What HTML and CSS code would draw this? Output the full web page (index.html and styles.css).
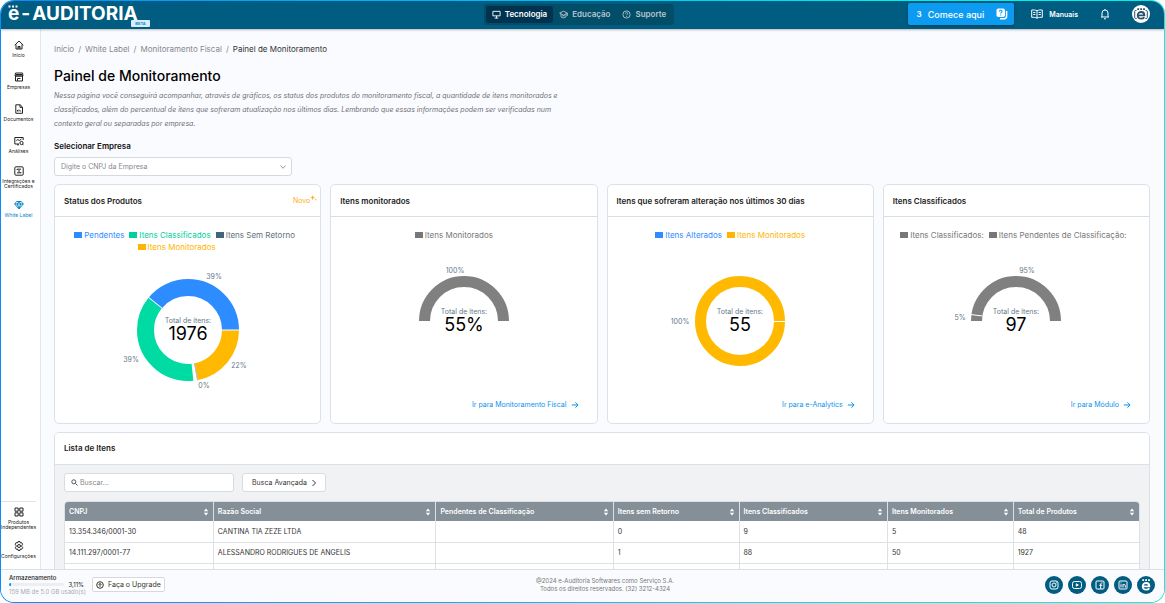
FILE: index.html
```html
<!DOCTYPE html>
<html lang="pt-BR">
<head>
<meta charset="utf-8">
<meta name="viewport" content="width=device-width, initial-scale=1">
<title>Painel de Monitoramento</title>
<link rel="stylesheet" href="styles.css">
</head>
<body>
<svg class="sprite" aria-hidden="true">
  <symbol id="sort" viewBox="0 0 6 8"><path d="M3 .6 5.2 3.2H.8zM3 7.4.8 4.8h4.4z" fill="currentColor"/></symbol>
  <symbol id="arrow" viewBox="0 0 8 8"><path d="M.8 4h6.2M4.4 1.3 7.1 4 4.4 6.7" fill="none" stroke="currentColor"/></symbol>
  <symbol id="brand" viewBox="0 0 18 18"><path d="M12.300 12.200c-.7 1-1.800 1.500-3.100 1.500-2.100 0-3.500-1.300-3.500-3.300s1.400-3.400 3.500-3.400c1.900 0 3.200 1.200 3.200 3.400H6.200" fill="none" stroke="currentColor" stroke-width="1.800"/><path d="M5.300 3.300h1.800v1.700H5.300zM8.200 3.300H10v1.700H8.200zM11.100 3.300h1.800v1.700h-1.800z" fill="currentColor"/></symbol>
</svg>
<div class="frame">
<div class="app">
  <header class="topbar">
    <a class="logo" href="#"><span class="logo-e">e<svg viewBox="0 0 10 3" aria-hidden="true"><path d="M.5.500h2v2h-2zM4 .500h2v2H4zM7.500.500h2v2h-2z"/></svg></span><span>-</span><span>AUDITORIA</span><span class="beta">BETA</span></a>
    <nav class="tabs">
      <button class="tab active"><svg viewBox="0 0 10 10"><path d="M1 1.500h8v5H1zM5 6.500V9M3 9h4"/></svg>Tecnologia</button>
      <button class="tab"><svg viewBox="0 0 10 10"><path d="M.700 3.500 5 1.300l4.300 2.200L5 5.700zM2.200 4.500v3c1.500 1.600 4 1.600 5.600 0v-3M9.300 3.500v3M3.500 6.500h3"/></svg>Educação</button>
      <button class="tab"><svg viewBox="0 0 10 10"><circle cx="5" cy="5" r="4"/><path d="M3.800 4c0-1.500 2.500-1.500 2.500 0 0 .900-1.200.900-1.200 1.900M5.100 6.800v.9"/></svg>Suporte</button>
    </nav>
    <div class="actions">
      <button class="start"><b>3</b><span>Comece aqui</span><svg viewBox="0 0 12 12"><rect x=".5" y=".5" width="8.500" height="8.500" rx="1.800" fill="#fff"/><path d="M10.600 3v5.300a2.500 2.500 0 0 1-2.500 2.500H4" fill="none" stroke="#fff" stroke-width="1.500"/><path d="M3.500 3.500c0-1.800 2.700-1.500 2.500.2C5.900 4.500 4.700 4.500 4.700 5.600M4.700 6.500v1" fill="none" stroke="#0c9bf0" stroke-width="1.100"/></svg></button>
      <a class="manuals" href="#"><svg viewBox="0 0 12 10"><path d="M6 1.800C4.500.900 2.500.900.700 1v7.300c1.800-.100 3.800 0 5.300.900 1.500-.900 3.500-1 5.300-.900V1C9.500.900 7.500.900 6 1.800zM6 1.800v7.400M2.200 3.500h2.200M2.200 5.500h2.200M7.600 3.500h2.200M7.600 5.500h2.200"/></svg>Manuais</a>
      <button class="bell" aria-label="Notificações"><svg viewBox="0 0 10 12"><path d="M1 9h8M2 9V5a3 3 0 0 1 6 0v4M5 2V1M4 10.800h2"/></svg></button>
      <button class="avatar" aria-label="Conta"><svg viewBox="0 0 18 18"><circle cx="9" cy="9" r="9" fill="#fff"/><path d="M4.500 5.500h-.800a1 1 0 0 0-1 1v6a1 1 0 0 0 1 1h1M13.500 5.500h.8a1 1 0 0 1 1 1v6a1 1 0 0 1-1 1h-1" fill="none" stroke="currentColor"/><use href="#brand" width="18" height="18"/></svg></button>
    </div>
  </header>
  <div class="middle">
    <nav class="side">
      <div class="side-group">
        <a href="#"><svg viewBox="0 0 10 10"><path d="M.700 5.200 5 1l4.300 4.200M2 4.500V9h6V4.500M4 9V6.500h2V9M3.800 7h2.400"/></svg><span>Início</span></a>
        <a href="#"><svg viewBox="0 0 10 10"><path d="M1.500 1h7l.5 3H1zM1.500 4v5h7V4M1 4h8M2 2.500h6M3.500 9V6.500h3"/></svg><span>Empresas</span></a>
        <a href="#"><svg viewBox="0 0 10 10"><path d="M1.800.800h4.400l2.300 2.300v6.200H1.800zM6 1v2.400h2.500M3.500 7.500V6M5 7.500v-2M6.600 7.500v-1"/></svg><span>Documentos</span></a>
        <a href="#"><svg viewBox="0 0 10 10"><path d="M5 8H.800V1.500h8.400V4M2.300 4.500l1.500-1 1.500 1L7.500 3M3 8.800h2"/><circle cx="7.500" cy="7" r="1.600"/><path d="m8.600 8.200 1 1"/></svg><span>Análises</span></a>
        <a href="#"><svg viewBox="0 0 10 10"><rect x=".8" y=".8" width="8.400" height="8.400" rx="1"/><path d="M3 4V3.200h4M7 6v.8H3M4 5h2"/></svg><span>Integrações e Certificados</span></a>
        <a class="current" href="#"><svg viewBox="0 0 10 10"><path d="M2.600 1.500h4.800L9.300 4 5 9 .700 4zM.700 4h8.600M3.300 4 5 8.600 6.700 4 5 1.600z"/></svg><span>White Label</span></a>
      </div>
      <div class="side-group bottom">
        <a href="#"><svg viewBox="0 0 10 10"><path d="M1 1h3.200v3.200H1zM5.800 1H9v3.200H5.800zM1 5.800h3.200V9H1zM5.800 5.800H9V9H5.800z"/></svg><span>Produtos Independentes</span></a>
        <a href="#"><svg viewBox="0 0 10 10"><path d="M4 .6h2l.4 1.300 1.200-.3 1 1.700-.8 1 .1 1.400.800.900-1 1.700-1.300-.300L6 9.400H4L3.600 8l-1.300.3-1-1.700.8-.9-.1-1.400-.8-1 1-1.700 1.300.3z"/><circle cx="5" cy="5" r="1.500"/></svg><span>Configurações</span></a>
      </div>
    </nav>
    <main class="content">
      <nav class="crumbs" aria-label="Trilha"><a href="#">Início</a><i>/</i><a href="#">White Label</a><i>/</i><a href="#">Monitoramento Fiscal</a><i>/</i><span>Painel de Monitoramento</span></nav>
      <h1>Painel de Monitoramento</h1>
      <p class="intro">Nessa página você conseguirá acompanhar, através de gráficos, os status dos produtos do monitoramento fiscal, a quantidade de itens monitorados e classificados, além do percentual de itens que sofreram atualização nos últimos dias. Lembrando que essas informações podem ser verificadas num contexto geral ou separadas por empresa.</p>
      <label class="field-label" for="empresa">Selecionar Empresa</label>
      <div class="select-wrap">
        <select id="empresa"><option>Digite o CNPJ da Empresa</option></select>
        <svg viewBox="0 0 8 8"><path d="M1.500 2.500 4 5.300l2.500-2.800"/></svg>
      </div>

      <section class="cards">
        <article class="card">
          <header><h2>Status dos Produtos</h2><span class="new">Novo<svg viewBox="0 0 8 8"><path d="M3 0l.8 2.200L6 3l-2.200.800L3 6l-.8-2.200L0 3l2.200-.8zM6.600 4l.4 1 1 .4-1 .4-.4 1-.4-1-1-.4 1-.4z"/></svg></span></header>
          <ul class="legend wide">
            <li class="blue">Pendentes</li><li class="green">Itens Classificados</li><li class="slate">Itens Sem Retorno</li><li class="amber wrapped">Itens Monitorados</li>
          </ul>
          <svg class="chart" viewBox="0 0 160 140" role="img" aria-label="Status dos produtos">
            <g fill="none" stroke-width="17">
              <circle cx="80" cy="77" r="42.500" pathLength="100" stroke="#ffb900" stroke-dasharray="22.100 77.900"/>
              <circle cx="80" cy="77" r="42.500" pathLength="100" stroke="#00dba4" stroke-dasharray="37.600 62.400" stroke-dashoffset="-23.300"/>
              <circle cx="80" cy="77" r="42.500" pathLength="100" stroke="#2d8cff" stroke-dasharray="39.100 60.900" stroke-dashoffset="-60.900"/>
              <path d="M86.600 110.500 89.500 127.500" stroke="#a9c4d3" stroke-width="1"/>
              <path d="M113 77h19M54.500 55.500 39 43" stroke="#fff" stroke-width="1"/>
            </g>
            <text class="total" x="80" y="70">Total de itens:</text><text class="value" x="80" y="87">1976</text>
            <text class="pct" x="106" y="26">39%</text><text class="pct" x="23" y="109">39%</text><text class="pct" x="131" y="115">22%</text><text class="pct" x="96" y="135">0%</text>
          </svg>
        </article>
        <article class="card">
          <header><h2>Itens monitorados</h2></header>
          <ul class="legend"><li class="gray">Itens Monitorados</li></ul>
          <svg class="chart" viewBox="0 0 160 140" role="img" aria-label="Itens monitorados">
            <path d="M40.500 80a39.500 39.500 0 0 1 79 0" fill="none" stroke="#808080" stroke-width="11"/>
            <text class="total" x="80" y="73">Total de itens:</text><text class="value" x="80" y="90">55%</text>
            <text class="pct" x="71" y="32">100%</text>
          </svg>
          <a class="more" href="#">Ir para Monitoramento Fiscal<svg><use href="#arrow"/></svg></a>
        </article>
        <article class="card">
          <header><h2>Itens que sofreram alteração nos últimos 30 dias</h2></header>
          <ul class="legend"><li class="blue">Itens Alterados</li><li class="amber">Itens Monitorados</li></ul>
          <svg class="chart" viewBox="0 0 160 140" role="img" aria-label="Itens alterados">
            <circle cx="80" cy="80" r="39.500" fill="none" stroke="#ffb900" stroke-width="11"/>
            <path d="M114 80.500h12" stroke="#fff"/>
            <text class="total" x="80" y="73">Total de itens:</text><text class="value" x="80" y="90">55</text>
            <text class="pct" x="20" y="83">100%</text>
          </svg>
          <a class="more" href="#">Ir para e-Analytics<svg><use href="#arrow"/></svg></a>
        </article>
        <article class="card">
          <header><h2>Itens Classificados</h2></header>
          <ul class="legend wide"><li class="gray">Itens Classificados:</li><li class="gray">Itens Pendentes de Classificação:</li></ul>
          <svg class="chart" viewBox="0 0 160 140" role="img" aria-label="Itens classificados">
            <path d="M40.500 80a39.500 39.500 0 0 1 79 0" fill="none" stroke="#808080" stroke-width="11"/>
            <path d="M34.500 73.500 46.500 75" stroke="#fff"/>
            <text class="total" x="80" y="73">Total de itens:</text><text class="value" x="80" y="90">97</text>
            <text class="pct" x="91" y="32">95%</text><text class="pct" x="24" y="79">5%</text>
          </svg>
          <a class="more" href="#">Ir para Módulo<svg><use href="#arrow"/></svg></a>
        </article>
      </section>

      <section class="list">
        <h2>Lista de Itens</h2>
        <div class="list-body">
          <div class="tools">
            <label class="search"><svg viewBox="0 0 8 8"><circle cx="3.200" cy="3.200" r="2.300"/><path d="m5 5 2.500 2.500"/></svg><input type="text" placeholder="Buscar..." aria-label="Buscar"></label>
            <button class="advanced">Busca Avançada<svg viewBox="0 0 8 8"><path d="M2.500 1 5.500 4l-3 3"/></svg></button>
          </div>
          <div class="table-wrap">
          <table>
            <colgroup><col class="c-cnpj"><col class="c-name"><col class="c-pend"><col class="c-num"><col class="c-cnpj"><col class="c-num"><col class="c-num"></colgroup>
            <thead><tr>
              <th><div>CNPJ<svg><use href="#sort"/></svg></div></th>
              <th><div>Razão Social<svg><use href="#sort"/></svg></div></th>
              <th><div>Pendentes de Classificação<svg><use href="#sort"/></svg></div></th>
              <th><div>Itens sem Retorno<svg><use href="#sort"/></svg></div></th>
              <th><div>Itens Classificados<svg><use href="#sort"/></svg></div></th>
              <th><div>Itens Monitorados<svg><use href="#sort"/></svg></div></th>
              <th><div>Total de Produtos<svg><use href="#sort"/></svg></div></th>
            </tr></thead>
            <tbody>
              <tr><td>13.354.346/0001-30</td><td>CANTINA TIA ZEZE LTDA</td><td></td><td>0</td><td>9</td><td>5</td><td>48</td></tr>
              <tr><td>14.111.297/0001-77</td><td>ALESSANDRO RODRIGUES DE ANGELIS</td><td></td><td>1</td><td>88</td><td>50</td><td>1927</td></tr>
              <tr><td></td><td></td><td></td><td></td><td></td><td></td><td></td></tr>
            </tbody>
          </table>
          </div>
        </div>
      </section>
    </main>
  </div>
  <footer class="bottombar">
    <div class="left">
      <div class="storage">
        <strong>Armazenamento</strong>
        <div class="meter"><div class="track"><div class="fill" style="width:3.11%"></div></div><span>3,11%</span></div>
        <small>159 MB de 5.0 GB usado(s)</small>
      </div>
      <button class="upgrade"><svg viewBox="0 0 8 8"><circle cx="4" cy="4" r="3.300"/><path d="M4 5.800V2.500M2.600 3.800 4 2.400l1.400 1.400"/></svg>Faça o Upgrade</button>
    </div>
    <p>@2024 e-Auditoria Softwares como Serviço S.A.<br>Todos os direitos reservados. (32) 3212-4324</p>
    <div class="social">
      <a href="#" aria-label="Instagram"><svg viewBox="0 0 18 18"><rect x="5" y="5" width="8" height="8" rx="2"/><circle cx="9" cy="9" r="2"/><path d="M11 6.800h.8"/></svg></a>
      <a href="#" aria-label="YouTube"><svg viewBox="0 0 18 18"><rect x="4.500" y="5.500" width="9" height="7" rx="2"/><path d="m8.300 7.800 2 1.200-2 1.200z"/></svg></a>
      <a href="#" aria-label="Facebook"><svg viewBox="0 0 18 18"><rect x="5" y="5" width="8" height="8" rx="1"/><path d="M9.700 13V8c0-.800.500-1.200 1.800-1.100M8.300 9.300h3"/></svg></a>
      <a href="#" aria-label="LinkedIn"><svg viewBox="0 0 18 18"><rect x="5" y="5" width="8" height="8" rx="1"/><path d="M7 8.200V11.500M7 6.500v.8M9 11.500V8.200M9 9.200c.5-1.200 2.300-1 2.300.5v1.800"/></svg></a>
      <a href="#" aria-label="e-Auditoria"><svg class="solid" viewBox="0 0 18 18"><use href="#brand" width="18" height="18"/></svg></a>
    </div>
  </footer>
</div>
</div>
</body>
</html>
```
FILE: styles.css
```css
* { box-sizing: border-box; }

body {
  margin: 0;
  background: #fff;
  color: #222;
  font-family: Inter, "Liberation Sans", sans-serif;
  font-size: 7px;
}

h1, h2, p, ul { margin: 0; padding: 0; }
a { color: inherit; text-decoration: none; }
button, input, select { font: inherit; color: inherit; }
button { border: 0; background: none; padding: 0; cursor: pointer; }
svg { flex: none; }
.sprite { position: absolute; width: 0; height: 0; }

.frame {
  height: 100vh;
  padding: 1px;
  border-radius: 14px;
  background: linear-gradient(90deg, #0a8dfa, #00bdf4 45%, #00ece9 75%, #00f2e4);
}

.app {
  display: flex;
  flex-direction: column;
  height: 100%;
  border-radius: 13px;
  overflow: hidden;
  background: #fafbff;
}

/* Top bar */
.topbar {
  display: grid;
  grid-template-columns: 1fr auto 1fr;
  align-items: center;
  height: 28px;
  flex: none;
  padding: 0 14px 2px 7px;
  background: #005c80;
  box-shadow: 0 1px 2px #0004;
  z-index: 1;
}

.logo {
  position: relative;
  display: flex;
  gap: 2px;
  justify-self: start;
  color: #fff;
  font-size: 19px;
  font-weight: 700;
  line-height: 20px;
}
.logo-e { position: relative; }
.logo-e svg { position: absolute; left: 0; top: 1px; width: 10px; height: 3px; fill: #fff; }
.beta {
  position: absolute;
  right: -12px;
  bottom: -3px;
  padding: 0 4px;
  border-radius: 1px;
  background: #d5efff;
  color: #1188c0;
  font-size: 4px;
  line-height: 7px;
}

.tabs {
  display: flex;
  padding: 2px;
  border-radius: 3px;
  background: #024d68;
}
.tab {
  display: flex;
  align-items: center;
  gap: 4px;
  height: 17px;
  padding: 0 6px;
  border-radius: 3px;
  color: #b5c6d0;
  font-size: 8px;
  font-weight: 600;
}
.tab svg { width: 9px; height: 9px; fill: none; stroke: currentColor; }
.tab.active { background: #00334f; color: #fff; }

.actions { display: flex; align-items: center; justify-content: flex-end; color: #fff; }
.start {
  display: flex;
  align-items: center;
  gap: 6px;
  height: 22px;
  padding: 0 6px 0 9px;
  border-radius: 2px;
  background: #0c9bf0;
  box-shadow: 0 1px 3px #0005;
  font-size: 9px;
  font-weight: 500;
}
.start b { font-size: 8px; font-weight: 600; }
.start svg { width: 12px; height: 12px; margin-left: 6px; }
.manuals {
  display: flex;
  align-items: center;
  gap: 6px;
  margin-left: 17px;
  font-weight: 600;
}
.manuals svg { width: 12px; height: 10px; fill: none; stroke: currentColor; }
.bell { margin-left: 22px; }
.bell svg { display: block; width: 10px; height: 12px; fill: none; stroke: currentColor; }
.avatar { margin-left: 22px; color: #28506a; }
.avatar svg { display: block; width: 18px; height: 18px; }

/* Side menu */
.middle { display: flex; flex: 1; min-height: 0; }
.side {
  display: flex;
  flex-direction: column;
  justify-content: space-between;
  width: 40px;
  flex: none;
  padding: 4px 4px 3px 0;
  border-right: 1px solid #e3e6ea;
  background: #fff;
}
.side a {
  display: flex;
  flex-direction: column;
  align-items: center;
  justify-content: center;
  gap: 3px;
  height: 32px;
  color: #222;
  font-size: 5px;
  line-height: 5px;
  text-align: center;
}
.side svg { width: 10px; height: 10px; fill: none; stroke: currentColor; }
.side .current { color: #0b86c5; }
.bottom { border-top: 1px solid #dfe2e6; }

/* Content */
.content {
  flex: 1;
  min-width: 0;
  overflow: auto;
  scrollbar-width: none;
  padding: 14px 14px 14px 13px;
}
.crumbs { display: flex; gap: 4px; color: #85888d; font-size: 8px; line-height: 12px; }
.crumbs i { font-style: normal; }
.crumbs span { color: #333; }
h1 { margin-top: 12px; color: #000; font-size: 14px; font-weight: 500; line-height: 18px; }
.intro {
  max-width: 510px;
  margin-top: 4px;
  color: #6d7075;
  font-size: 7px;
  font-style: italic;
  font-weight: 400;
  line-height: 14px;
}
.field-label { display: block; margin-top: 9px; color: #111; font-size: 8px; font-weight: 600; line-height: 12px; }
.select-wrap { position: relative; width: 238px; margin-top: 5px; }
.select-wrap select {
  display: block;
  width: 100%;
  height: 19px;
  padding: 0 6px;
  border: 1px solid #d5d9dd;
  border-radius: 3px;
  appearance: none;
  background: #fff;
  color: #85888d;
}
.select-wrap svg { position: absolute; right: 5px; top: 6px; width: 8px; height: 8px; fill: none; stroke: #999; }

.cards {
  display: grid;
  grid-template-columns: repeat(4, minmax(0, 1fr));
  gap: 9px;
  margin-top: 8px;
}
.card {
  display: flex;
  flex-direction: column;
  align-items: center;
  min-height: 240px;
  border: 1px solid #dce1e6;
  border-radius: 5px;
  background: #fff;
}
.card header {
  display: flex;
  align-items: center;
  justify-content: space-between;
  align-self: stretch;
  height: 32px;
  padding: 0 3px 0 9px;
  border-bottom: 1px solid #d8dfe5;
}
h2 { color: #222; font-size: 8px; font-weight: 600; }
.new { display: flex; color: #fdb022; }
.new svg { width: 7px; height: 7px; margin-top: -1px; fill: currentColor; }

.legend {
  display: flex;
  flex-wrap: wrap;
  justify-content: center;
  gap: 0 5px;
  margin-top: 12px;
  padding: 0 20px 0 0;
  list-style: none;
  font-size: 8px;
  line-height: 12px;
}
.legend.wide { padding: 0 18px 0 12px; }
.legend li { display: flex; align-items: center; gap: 2px; white-space: nowrap; }
.legend .wrapped { margin-right: 16px; }
.legend li::before { content: ""; width: 8px; height: 6px; background: currentColor; }
.blue { color: #2d8cff; }
.green { color: #00d09c; }
.amber { color: #ffb500; }
.gray { color: #777; }
.slate { color: #62717e; }
.legend .slate::before { background: #44647e; }

.chart { width: 160px; height: 140px; overflow: visible; }
.chart text { text-anchor: middle; }
.total, .pct { fill: #66788a; font-size: 7px; }
.value { fill: #000; font-size: 18px; }

.more {
  display: flex;
  align-items: center;
  gap: 4px;
  align-self: flex-end;
  margin: auto 18px 13px;
  color: #0a94ee;
  line-height: 10px;
}
.more svg { width: 8px; height: 8px; }

/* Item list */
.list { margin-top: 8px; border: 1px solid #dce1e6; border-radius: 5px; background: #f1f2f4; overflow: hidden; }
.list h2 { padding: 0 9px; border-bottom: 1px solid #dce1e6; background: #fff; line-height: 31px; }
.list-body { padding: 8px 9px; }
.tools { display: flex; gap: 8px; }
.search, .advanced {
  display: flex;
  align-items: center;
  height: 19px;
  border: 1px solid #d8dde1;
  border-radius: 3px;
  background: #fff;
}
.search { gap: 2px; width: 170px; padding: 0 6px; }
.search svg { width: 7px; height: 7px; fill: none; stroke: #444; }
.search input { flex: 1; min-width: 0; padding: 0; border: 0; outline: 0; background: none; }
.search input::placeholder { color: #888; }
.advanced { gap: 3px; padding: 0 7px 0 9px; color: #333; }
.advanced svg { width: 8px; height: 8px; fill: none; stroke: currentColor; }

.table-wrap { margin-top: 9px; border: 1px solid #dce1e6; border-radius: 4px 4px 0 0; overflow: hidden; background: #fff; }
table { width: 100%; border-collapse: collapse; table-layout: fixed; }
.c-cnpj { width: 13.800%; }
.c-name { width: 20.700%; }
.c-pend { width: 16.500%; }
.c-num { width: 11.700%; }
th, td { padding: 0 4px; text-align: left; }
th { height: 19px; background: #848f98; color: #fff; font-weight: 600; }
th div { display: flex; align-items: center; justify-content: space-between; }
th svg { width: 6px; height: 8px; }
td { height: 21px; border-bottom: 1px solid #dce1e6; color: #333; }
th + th, td + td { border-left: 1px solid #dce1e6; }

/* Bottom bar */
.bottombar {
  display: grid;
  grid-template-columns: 1fr auto 1fr;
  align-items: center;
  flex: none;
  height: 33px;
  padding: 0 9px 3px 8px;
  border-top: 1px solid #dce0e5;
  background: #fafbff;
}
.left { display: flex; align-items: center; gap: 8px; }
.storage { width: 75px; font-size: 6px; line-height: 7px; white-space: nowrap; }
.storage strong { display: block; font-weight: 500; color: #222; }
.meter { display: flex; align-items: center; gap: 4px; }
.track { flex: 1; height: 3px; border-radius: 2px; background: #eceef0; overflow: hidden; }
.fill { height: 100%; background: #0a94ee; }
.storage small { display: block; color: #a9acb0; font-size: 6px; }
.upgrade {
  display: flex;
  align-items: center;
  gap: 4px;
  height: 15px;
  padding: 0 3px;
  border: 1px solid #d5d9dd;
  border-radius: 2px;
  background: #fff;
  color: #333;
}
.upgrade svg { width: 8px; height: 8px; fill: none; stroke: currentColor; }
.bottombar p { padding-left: 46px; color: #777; font-size: 6px; line-height: 8px; text-align: center; }
.social { display: flex; gap: 5px; justify-content: flex-end; color: #fff; }
.social a { display: block; width: 18px; height: 18px; border-radius: 50%; background: #005c80; }
.social svg { display: block; width: 18px; height: 18px; fill: none; stroke: currentColor; }
.social .solid { stroke: none; }
```
